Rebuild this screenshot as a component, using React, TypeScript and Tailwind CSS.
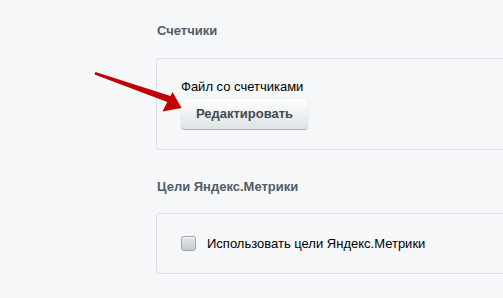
import React from "react";

export default function App() {
  return (
    <div
      className="relative w-[503px] h-[298px] overflow-hidden bg-[#f5f7f8] pl-[156px] pt-[23px]"
      style={{ fontFamily: '"Liberation Sans", Arial, sans-serif' }}
    >
      <div className="ml-[1px] text-[13px] leading-[15px] font-bold text-[#535c69]">Счетчики</div>
      <div className="mt-[20px] w-[400px] rounded-[3px] border border-[#dce1e5] pl-[24px] pt-[20px] pb-[20px]">
        <div className="text-[13px] leading-[15px] text-black">Файл со счетчиками</div>
        <button
          className="mt-[5px] flex h-[30px] w-[127px] items-center justify-center rounded-[4px] bg-gradient-to-b from-white to-[#dde3e6] text-[13px] font-bold text-[#3f4b54] shadow-[0_0_1px_rgba(0,0,0,0.15),0_1px_1px_rgba(0,0,0,0.3),inset_0_1px_#fff]"
          style={{ fontFamily: '"Liberation Sans", Arial, sans-serif' }}
        >
          Редактировать
        </button>
      </div>
      <div className="mt-[29px] ml-[1px] text-[13px] leading-[15px] font-bold text-[#535c69]">Цели Яндекс.Метрики</div>
      <div className="mt-[19px] w-[400px] rounded-[3px] border border-[#dce1e5] pl-[24px] pt-[22px] pb-[22px] flex items-center">
        <div className="h-[15px] w-[15px] rounded-[3px] border border-[#9ea5a9] bg-gradient-to-b from-[#e6e9eb] to-[#c4cacd] shadow-[inset_0_1px_1px_rgba(255,255,255,0.8)]" />
        <span className="ml-[11px] text-[13px] leading-[15px] text-black">Использовать цели Яндекс.Метрики</span>
      </div>
      <svg className="absolute left-0 top-0" width="503" height="298" viewBox="0 0 503 298">
        <polygon
          points="95.4,72 170.5,96 172.5,92 181.5,108 162.5,111.5 167.3,102 94.6,74.5"
          fill="#c00000"
        />
      </svg>
    </div>
  );
}
